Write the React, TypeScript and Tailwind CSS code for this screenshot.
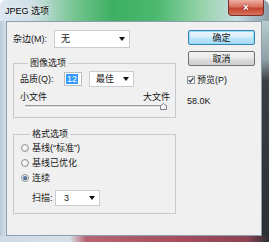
import React from "react";

const font = "font-['Liberation_Sans','Noto_Sans_CJK_SC',sans-serif]";

function Arrow() {
  return (
    <svg width="6" height="4" viewBox="0 0 6 4">
      <path d="M0 0h6L3 4z" fill="#111" />
    </svg>
  );
}

function Combo({ value, className }: { value: string; className: string }) {
  return (
    <div
      className={
        "flex items-center justify-between bg-white border border-[#c9ccd1] pl-[6px] pr-[4px] " +
        className
      }
    >
      <span>{value}</span>
      <Arrow />
    </div>
  );
}

function Radio({ label, checked }: { label: string; checked?: boolean }) {
  return (
    <div className="flex items-center h-[15px] gap-[3px]">
      <div className="w-[8px] h-[8px] rounded-full border border-[#8f959b] bg-[radial-gradient(circle_at_40%_40%,#ffffff,#d4d8dc)] flex items-center justify-center">
        {checked && (
          <div className="w-[4px] h-[4px] rounded-full bg-[radial-gradient(circle_at_35%_35%,#6a8fb8,#1b3555)]" />
        )}
      </div>
      <span>{label}</span>
    </div>
  );
}

export default function App() {
  return (
    <div
      className={`w-[269px] h-[242px] flex flex-col overflow-hidden rounded-t-[6px] text-[9px] leading-[12px] text-[#151515] ${font}`}
    >
      {/* title bar */}
      <div className="relative h-[21px] shrink-0 flex items-center pl-[5px] bg-[linear-gradient(90deg,#dce7f1_0%,#cfe0e6_12%,#74c48f_28%,#3daf63_42%,#4cb86f_58%,#93d1a7_74%,#c6dce0_88%,#8d9ea9_100%)]">
        <span className="text-[9px] text-black [text-shadow:0_0_5px_#ffffff]">JPEG 选项</span>
        <div className="absolute left-[228px] top-0 w-[36px] h-[16px] rounded-b-[4px] border border-t-0 border-[#7b2f2a] bg-[linear-gradient(180deg,#eeb0a2_0%,#d7705f_45%,#c4432f_55%,#d8745a_100%)] flex items-center justify-center">
          <span className="text-white font-bold text-[10px] leading-none [text-shadow:0_0_2px_#6b1a10]">×</span>
        </div>
      </div>

      <div className="flex flex-1 min-h-0">
        <div className="w-[6px] bg-[linear-gradient(90deg,#b9c9d8,#d3dfea)]" />

        {/* client area */}
        <div className="flex-1 bg-[#f0f0f0] border border-[#8c9cab] flex pl-[6px] pt-[8px]">
          {/* left column */}
          <div className="w-[163px] flex flex-col">
            <div className="flex items-center h-[18px]">
              <span className="w-[41px]">杂边(M):</span>
              <Combo value="无" className="w-[76px] h-[18px]" />
            </div>

            {/* 图像选项 */}
            <div className="relative mt-[15px] h-[55px] border border-[#c4cad0] pt-[7px] pl-[6px] pr-[5px]">
              <span className="absolute left-[14px] top-[-7px] px-[2px] bg-[#f0f0f0]">图像选项</span>
              <div className="flex items-center h-[16px]">
                <span className="w-[44px]">品质(Q):</span>
                <div className="w-[18px] h-[14px] bg-white border border-[#b8bdc3] flex items-center pl-[1px]">
                  <span className="bg-[#3399ff] text-white px-[1px] leading-[10px]">12</span>
                </div>
                <Combo value="最佳" className="ml-[7px] w-[45px] h-[16px]" />
              </div>
              <div className="mt-[4px] h-[12px] flex justify-between">
                <span>小文件</span>
                <span>大文件</span>
              </div>
              <div className="relative h-[6px] ml-[5px] mr-[3px] flex items-center">
                <div className="w-full h-[3px] border-t border-[#9a9fa4] bg-[#d6d9dc] border-b border-b-[#ffffff]" />
                <svg className="absolute right-[0px] top-[0px]" width="7" height="7" viewBox="0 0 7 7">
                  <path d="M0.5 6.5V3L3.5 0.5L6.5 3V6.5Z" fill="#f6f6f6" stroke="#7c8187" />
                </svg>
              </div>
            </div>

            {/* 格式选项 */}
            <div className="relative mt-[16px] h-[80px] border border-[#c4cad0] pt-[5px] pl-[7px]">
              <span className="absolute left-[16px] top-[-7px] px-[2px] bg-[#f0f0f0]">格式选项</span>
              <Radio label="基线(“标准”)" />
              <Radio label="基线已优化" />
              <Radio label="连续" checked />
              <div className="mt-[5px] h-[16px] pl-[11px] flex items-center">
                <span className="w-[23px]">扫描:</span>
                <Combo value="3" className="w-[45px] h-[16px] pl-[8px]" />
              </div>
            </div>
          </div>

          {/* right column */}
          <div className="ml-[11px] w-[68px] flex flex-col">
            <div className="h-[15px] ml-[1px] rounded-[2px] border border-[#3c7fb1] bg-[linear-gradient(180deg,#eaf6fd_0%,#d9f0fc_45%,#bee6fd_55%,#a7d9f5_100%)] shadow-[inset_0_0_0_1px_#8fe0f7] flex items-center justify-center">
              确定
            </div>
            <div className="h-[15px] mt-[6px] ml-[1px] rounded-[2px] border border-[#707070] bg-[linear-gradient(180deg,#f2f2f2_0%,#ebebeb_45%,#dddddd_55%,#cfcfcf_100%)] flex items-center justify-center">
              取消
            </div>
            <div className="mt-[8px] h-[12px] flex items-center gap-[2px]">
              <div className="w-[8px] h-[8px] border border-[#8f959b] bg-[linear-gradient(135deg,#e6e8ea,#ffffff)] flex items-center justify-center">
                <svg width="6" height="6" viewBox="0 0 6 6">
                  <path d="M0.6 3.2L2.3 4.9L5.4 0.8" fill="none" stroke="#2a3a4a" strokeWidth="1.2" />
                </svg>
              </div>
              <span>预览(P)</span>
            </div>
            <div className="mt-[9px] h-[12px] flex items-center">58.0K</div>
          </div>
        </div>

        <div className="w-[7px] bg-[linear-gradient(180deg,#b6cdd0_0%,#8ea0a8_18%,#3b3f44_28%,#2c2f33_100%)]" />
      </div>

      <div className="h-[6px] shrink-0 bg-[linear-gradient(90deg,#cfdbe6_0%,#d5dfe8_26%,#b86474_32%,#a24c5e_70%,#8c4252_92%,#2d2f33_100%)]" />
    </div>
  );
}
